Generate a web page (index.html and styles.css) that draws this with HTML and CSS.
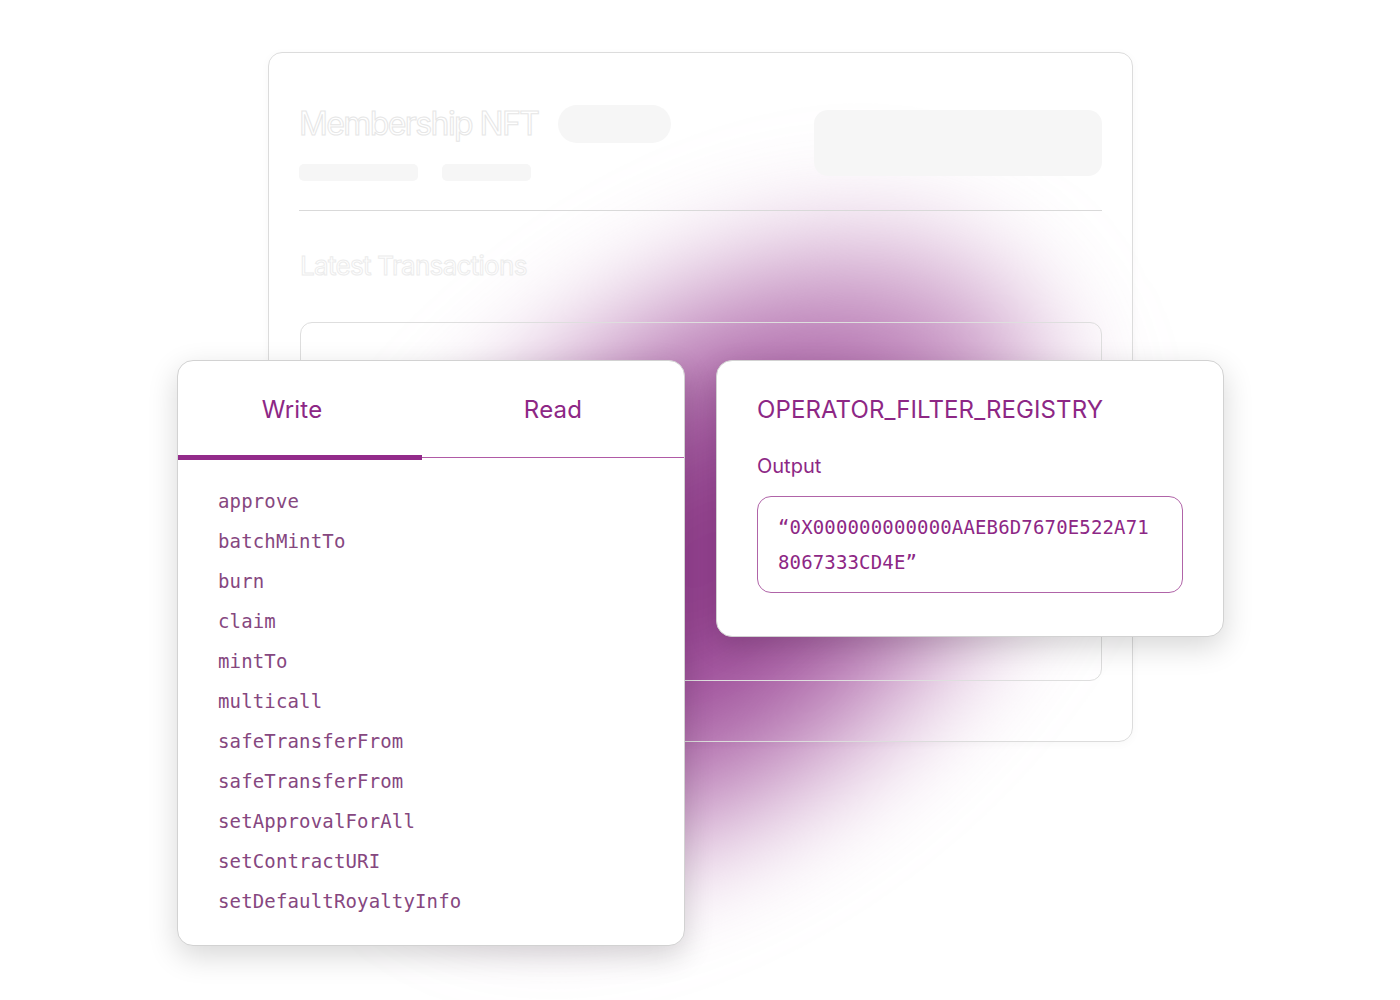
FILE: index.html
```html
<!DOCTYPE html>
<html lang="en">
<head>
<meta charset="utf-8">
<title>Contract explorer</title>
<link rel="stylesheet" href="styles.css">
</head>
<body>
<div class="stage">
  <div class="glow"></div>

  <section class="back-card">
    <div class="back-head">
      <div class="back-head-left">
        <div class="back-title-row">
          <h1 class="back-title">Membership NFT</h1>
          <span class="ghost-pill"></span>
        </div>
        <div class="ghost-bars">
          <span class="ghost-bar wide"></span>
          <span class="ghost-bar narrow"></span>
        </div>
      </div>
      <span class="ghost-button"></span>
    </div>
    <hr class="back-divider">
    <h2 class="back-subtitle">Latest Transactions</h2>
    <div class="back-inner"></div>
  </section>

  <section class="card functions-card">
    <div class="tabs">
      <div class="tab active">Write</div>
      <div class="tab">Read</div>
    </div>
    <ul class="fn-list">
      <li>approve</li>
      <li>batchMintTo</li>
      <li>burn</li>
      <li>claim</li>
      <li>mintTo</li>
      <li>multicall</li>
      <li>safeTransferFrom</li>
      <li>safeTransferFrom</li>
      <li>setApprovalForAll</li>
      <li>setContractURI</li>
      <li>setDefaultRoyaltyInfo</li>
    </ul>
  </section>

  <section class="card output-card">
    <h3 class="output-title">OPERATOR_FILTER_REGISTRY</h3>
    <div class="output-label">Output</div>
    <div class="output-box">
      <span class="output-line">“0X000000000000AAEB6D7670E522A71</span>
      <span class="output-line">8067333CD4E”</span>
    </div>
  </section>
</div>
</body>
</html>
```

FILE: styles.css
```css
* { box-sizing: border-box; }

html, body {
  margin: 0;
  padding: 0;
  background: #ffffff;
}

body {
  font-family: "Inter", "Roboto", "Liberation Sans", sans-serif;
  overflow: hidden;
}

.stage {
  position: relative;
  width: 1400px;
  height: 1000px;
  overflow: hidden;
  background: #ffffff;
}

/* purple glow */
.glow {
  position: absolute;
  left: 295px;
  top: 305px;
  width: 820px;
  height: 510px;
  border-radius: 50%;
  background: radial-gradient(ellipse at center,
    rgba(135, 45, 130, 0.97) 0%,
    rgba(150, 62, 145, 0.88) 35%,
    rgba(178, 105, 172, 0.55) 62%,
    rgba(205, 160, 205, 0) 100%);
  filter: blur(55px);
  transform: rotate(-40deg);
}

/* faded background card */
.back-card {
  position: absolute;
  left: 268px;
  top: 52px;
  width: 865px;
  height: 690px;
  border: 1px solid #dcdcdc;
  border-radius: 14px;
  padding: 52px 30px 0 30px;
  box-shadow: 0 2px 10px rgba(0, 0, 0, 0.03);
}

.back-head {
  display: flex;
  justify-content: space-between;
  align-items: flex-start;
}

.back-title-row {
  display: flex;
  align-items: center;
  gap: 20px;
}

.back-title {
  margin: 0;
  font-size: 32px;
  line-height: 38px;
  font-weight: 400;
  letter-spacing: -1.6px;
  color: transparent;
  -webkit-text-stroke: 1px #e6e6e6;
}

.ghost-pill {
  display: block;
  width: 113px;
  height: 38px;
  border-radius: 19px;
  background: #f6f6f6;
}

.ghost-bars {
  display: flex;
  gap: 24px;
  margin-top: 21px;
}

.ghost-bar {
  display: block;
  height: 17px;
  border-radius: 5px;
  background: #f6f6f6;
}
.ghost-bar.wide { width: 119px; }
.ghost-bar.narrow { width: 89px; }

.ghost-button {
  display: block;
  width: 288px;
  height: 66px;
  margin-top: 5px;
  border-radius: 14px;
  background: #f6f6f6;
}

.back-divider {
  margin: 29px 0 0 0;
  border: 0;
  border-top: 1px solid #d9d9d9;
  height: 0;
}

.back-subtitle {
  margin: 40px 0 0 1px;
  font-size: 26px;
  line-height: 30px;
  font-weight: 400;
  letter-spacing: -0.7px;
  color: transparent;
  -webkit-text-stroke: 1px #ececec;
}

.back-inner {
  margin-top: 41px;
  margin-left: 1px;
  width: 802px;
  height: 359px;
  border: 1px solid #dedede;
  border-radius: 12px;
}

/* front cards */
.card {
  position: absolute;
  background: #ffffff;
  border: 1px solid #d2d2d2;
  border-radius: 16px;
  box-shadow: 0 10px 30px rgba(0, 0, 0, 0.16);
}

.functions-card {
  left: 177px;
  top: 360px;
  width: 508px;
  height: 586px;
  overflow: hidden;
}

.tabs {
  position: relative;
  display: flex;
  height: 97px;
  border-bottom: 1px solid #b05aa6;
}

.tab {
  position: relative;
  display: flex;
  align-items: center;
  justify-content: center;
  padding-top: 0;
  font-size: 24px;
  color: #8d2785;
  letter-spacing: 0.2px;
}

.tab:first-child { width: 244px; padding-right: 16px; }
.tab:last-child { flex: 1; }

.tab.active::after {
  content: "";
  position: absolute;
  left: 0;
  right: 0;
  bottom: -3px;
  height: 5px;
  background: #932b8a;
}

.fn-list {
  list-style: none;
  margin: 0;
  padding: 23px 0 0 40px;
}

.fn-list li {
  height: 40px;
  line-height: 40px;
  font-family: "DejaVu Sans Mono", "Liberation Mono", monospace;
  font-size: 19px;
  letter-spacing: 0.15px;
  color: #86477f;
}

.output-card {
  left: 716px;
  top: 360px;
  width: 508px;
  height: 277px;
  padding: 34px 40px 0 40px;
}

.output-title {
  margin: 0;
  font-size: 24px;
  line-height: 30px;
  font-weight: 400;
  letter-spacing: 0.1px;
  color: #8d2785;
}

.output-label {
  margin-top: 29px;
  font-size: 20px;
  line-height: 24px;
  color: #8d2785;
}

.output-box {
  margin-top: 18px;
  width: 426px;
  height: 97px;
  border: 1px solid #b064a8;
  border-radius: 14px;
  padding: 13px 20px;
}

.output-line {
  display: block;
  height: 35px;
  line-height: 35px;
  font-family: "DejaVu Sans Mono", "Liberation Mono", monospace;
  font-size: 19px;
  letter-spacing: 0.15px;
  color: #8d2785;
  white-space: nowrap;
}
```
